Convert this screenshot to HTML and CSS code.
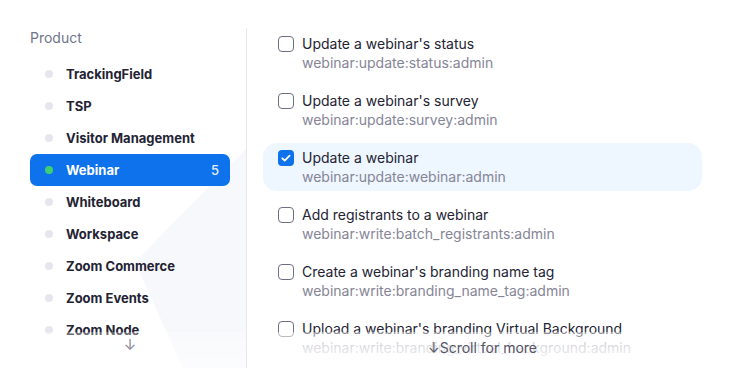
FILE: index.html
```html
<!DOCTYPE html>
<html lang="en">
<head>
  <meta charset="UTF-8">
  <meta name="viewport" content="width=device-width, initial-scale=1.0">
  <title>Scopes - Webinar</title>
  <link rel="stylesheet" href="styles.css">
</head>
<body>
  <div class="scopes">
    <aside class="products">
      <div class="products-title">Product</div>
      <ul class="product-list">
        <li class="product"><span class="dot"></span><span class="name">TrackingField</span></li>
        <li class="product"><span class="dot"></span><span class="name">TSP</span></li>
        <li class="product"><span class="dot"></span><span class="name">Visitor Management</span></li>
        <li class="product active"><span class="dot"></span><span class="name">Webinar</span><span class="count">5</span></li>
        <li class="product"><span class="dot"></span><span class="name">Whiteboard</span></li>
        <li class="product"><span class="dot"></span><span class="name">Workspace</span></li>
        <li class="product"><span class="dot"></span><span class="name">Zoom Commerce</span></li>
        <li class="product"><span class="dot"></span><span class="name">Zoom Events</span></li>
        <li class="product"><span class="dot"></span><span class="name">Zoom Node</span></li>
      </ul>
      <div class="fade"></div>
      <div class="more-arrow">↓</div>
    </aside>

    <section class="perms">
      <ul class="perm-list">
        <li class="perm">
          <span class="check"></span>
          <div class="perm-text">
            <div class="perm-title">Update a webinar's status</div>
            <div class="perm-scope">webinar:update:status:admin</div>
          </div>
        </li>
        <li class="perm">
          <span class="check"></span>
          <div class="perm-text">
            <div class="perm-title">Update a webinar's survey</div>
            <div class="perm-scope">webinar:update:survey:admin</div>
          </div>
        </li>
        <li class="perm selected">
          <span class="check">
            <svg viewBox="0 0 16 16" width="16" height="16"><path d="M4.3 8.3l2.4 2.3 4.9-5" fill="none" stroke="#fff" stroke-width="1.8" stroke-linecap="round" stroke-linejoin="round"/></svg>
          </span>
          <div class="perm-text">
            <div class="perm-title">Update a webinar</div>
            <div class="perm-scope">webinar:update:webinar:admin</div>
          </div>
        </li>
        <li class="perm">
          <span class="check"></span>
          <div class="perm-text">
            <div class="perm-title">Add registrants to a webinar</div>
            <div class="perm-scope">webinar:write:batch_registrants:admin</div>
          </div>
        </li>
        <li class="perm">
          <span class="check"></span>
          <div class="perm-text">
            <div class="perm-title">Create a webinar's branding name tag</div>
            <div class="perm-scope">webinar:write:branding_name_tag:admin</div>
          </div>
        </li>
        <li class="perm">
          <span class="check"></span>
          <div class="perm-text">
            <div class="perm-title">Upload a webinar's branding Virtual Background</div>
            <div class="perm-scope">webinar:write:branding_virtual_background:admin</div>
          </div>
        </li>
      </ul>
      <div class="fade"></div>
      <div class="scroll-hint">↓Scroll for more</div>
    </section>
  </div>
</body>
</html>
```

FILE: styles.css
```css
body {
  font-family: Inter, "Noto Sans", sans-serif;
  margin: 0;
  padding: 0;
  color: #232333;
  background-color: #fff;
}

ul {
  list-style: none;
  margin: 0;
  padding: 0;
}

.scopes {
  display: flex;
  padding-top: 28px;
  height: 345px;
}

/* left column: product list */
.products {
  position: relative;
  width: 247px;
  flex-shrink: 0;
  padding-left: 30px;
  border-right: 1px solid #e8e8ec;
  height: 340px;
  overflow: hidden;
  box-sizing: border-box;
}

/* faint decorative chevron behind the list */
.products::before {
  content: "";
  position: absolute;
  left: 0;
  top: 0;
  width: 247px;
  height: 345px;
  background: #f7f8fc;
  clip-path: polygon(247px 120px, 135px 234px, 185px 345px, 247px 345px);
  z-index: -1;
}

.products-title {
  font-size: 14px;
  line-height: 20px;
  color: #6e7489;
  margin-bottom: 10px;
}

.product {
  display: flex;
  align-items: center;
  width: 200px;
  height: 32px;
  padding: 0 11px 0 15px;
  box-sizing: border-box;
  border-radius: 7px;
  font-size: 13px;
  font-weight: 700;
}

.dot {
  width: 8px;
  height: 8px;
  border-radius: 50%;
  background-color: #e6e6ee;
  margin-right: 13px;
  flex-shrink: 0;
}

.product .name {
  flex: 1;
}

.product.active {
  background-color: #0e72ed;
  color: #fff;
}

.product.active .dot {
  background-color: #3ecf72;
}

.count {
  font-weight: 500;
  color: #e3eefd;
}

.more-arrow {
  position: absolute;
  left: 30px;
  width: 200px;
  top: 307px;
  text-align: center;
  font-size: 15px;
  color: #8a8a99;
}

.fade {
  position: absolute;
  left: 0;
  right: 0;
  top: 304px;
  bottom: 0;
  background: linear-gradient(rgba(255, 255, 255, 0.45), rgba(255, 255, 255, 0.95) 70%);
}

.products .fade {
  background: linear-gradient(rgba(255, 255, 255, 0.3), rgba(255, 255, 255, 0.6));
}

/* right column: permission list */
.perms {
  position: relative;
  flex: 1;
  padding: 1px 33px 0 16px;
  height: 345px;
  overflow: hidden;
}

.perm-list {
  display: flex;
  flex-direction: column;
  gap: 9px;
}

.perm {
  display: flex;
  align-items: flex-start;
  gap: 8px;
  padding: 5px 15px;
  border-radius: 14px;
}

.perm.selected {
  background-color: #eef6ff;
}

.check {
  width: 16px;
  height: 16px;
  margin-top: 2px;
  border: 1.5px solid #6e6e80;
  border-radius: 4px;
  box-sizing: border-box;
  flex-shrink: 0;
  background: #fff;
}

.perm.selected .check {
  border: none;
  background-color: #0e72ed;
}

.check svg {
  display: block;
}

.perm-title {
  font-size: 14px;
  line-height: 20px;
  color: #232333;
}

.perm-scope {
  font-size: 14px;
  line-height: 18px;
  color: #858596;
}

.scroll-hint {
  position: absolute;
  left: 16px;
  right: 33px;
  top: 311px;
  text-align: center;
  font-size: 14px;
  line-height: 18px;
  color: #555566;
}
```
